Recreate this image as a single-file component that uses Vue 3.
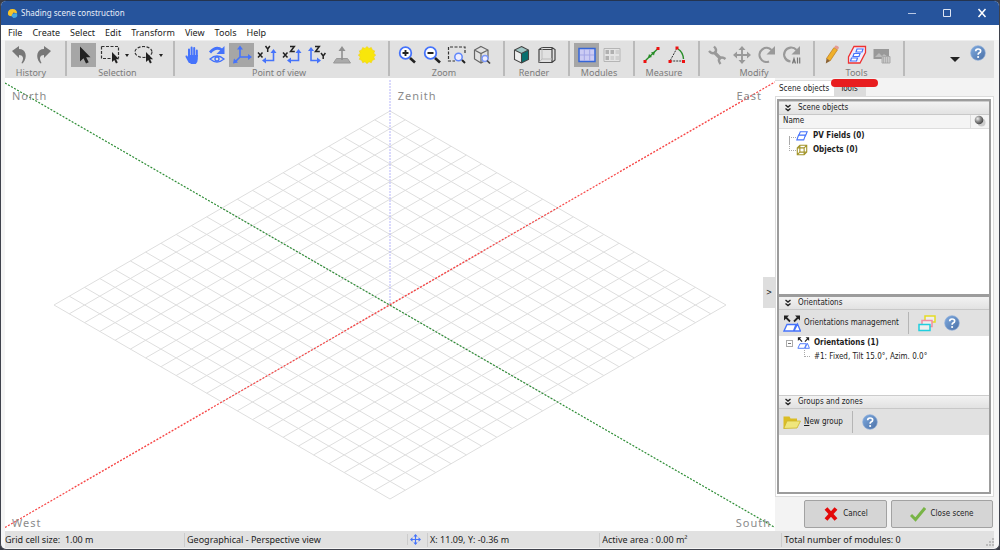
<script setup>
import { ref } from 'vue'

const menus = ['File', 'Create', 'Select', 'Edit', 'Transform', 'View', 'Tools', 'Help']

const groups = [
  { name: 'History', items: [{ id: 'undo' }, { id: 'redo' }] },
  { name: 'Selection', items: [{ id: 'pointer', active: true }, { id: 'rect-select', drop: true }, { id: 'lasso', drop: true }] },
  {
    name: 'Point of view',
    items: [{ id: 'hand' }, { id: 'orbit' }, { id: 'axes', active: true }, { id: 'view-xy' }, { id: 'view-xz' }, { id: 'view-zy' }, { id: 'plane' }, { id: 'sun' }]
  },
  { name: 'Zoom', items: [{ id: 'zoom-in' }, { id: 'zoom-out' }, { id: 'zoom-rect' }, { id: 'zoom-cube' }] },
  { name: 'Render', items: [{ id: 'solid' }, { id: 'wire' }] },
  { name: 'Modules', items: [{ id: 'modules', active: true }, { id: 'modules-part' }] },
  { name: 'Measure', items: [{ id: 'distance' }, { id: 'angle' }] },
  { name: 'Modify', items: [{ id: 'wrench' }, { id: 'move' }, { id: 'rotate' }, { id: 'rotate-all' }] },
  { name: 'Tools', items: [{ id: 'pencil' }, { id: 'fields' }, { id: 'picture' }] }
]

const tab = ref('scene')

const cells = 22
const cx = 385
const cy = 227
const halfW = 336
const halfH = 194
const gridPath = Array.from({ length: cells + 1 }, (_, i) => {
  const t = i / cells
  const dx = halfW * t
  const dy = halfH * t
  return `M${cx - halfW + dx} ${cy - dy}L${cx + dx} ${cy + halfH - dy}M${cx - halfW + dx} ${cy + dy}L${cx + dx} ${cy - halfH + dy}`
}).join('')
</script>

<template>
  <svg class="defs" aria-hidden="true">
    <defs>
      <linearGradient id="helpFill" x1="0" y1="0" x2="1" y2="1">
        <stop offset="0" stop-color="#7fabe0" /><stop offset="1" stop-color="#4a6fa5" />
      </linearGradient>
      <radialGradient id="ballFill" cx="0.35" cy="0.35" r="0.7">
        <stop offset="0" stop-color="#eeeeee" /><stop offset="0.5" stop-color="#888888" /><stop offset="1" stop-color="#444444" />
      </radialGradient>
    </defs>
    <symbol id="undo" viewBox="0 0 24 24"><path d="M5 8l7-5v3c7 0 9 8 4 14-1 1-2 0-1-1 2-4 1-7-3-7v3z" fill="#777" /></symbol>
    <symbol id="redo" viewBox="0 0 24 24"><path d="M19 8l-7-5v3c-7 0-9 8-4 14 1 1 2 0 1-1-2-4-1-7 3-7v3z" fill="#777" /></symbol>
    <symbol id="pointer" viewBox="0 0 24 24"><path d="M8 3.500v15l3.500-3.200 2.500 5.200 2.700-1.300-2.500-5h4.300z" fill="#222" /></symbol>
    <symbol id="rect-select" viewBox="0 0 24 24">
      <path d="M3.500 3.500h17v12M3.500 3.500v12h11" fill="none" stroke="#333" stroke-width="1.200" stroke-dasharray="3 1.500" />
      <path d="M14 9v10l2.300-2 1.700 3.500 1.800-.9-1.700-3.400h3z" fill="#222" />
    </symbol>
    <symbol id="lasso" viewBox="0 0 24 24">
      <ellipse cx="11.500" cy="9" rx="8.500" ry="5.500" fill="none" stroke="#333" stroke-width="1.200" stroke-dasharray="3 1.500" />
      <path d="M14 9v10l2.300-2 1.700 3.500 1.800-.9-1.700-3.400h3z" fill="#222" />
    </symbol>
    <symbol id="hand" viewBox="0 0 24 24">
      <path d="M9.500 19L6.500 13.500M9 13V6.500M11.600 12V4.500M14.200 12V5M16.800 13V7.500" stroke="#4573fb" stroke-width="2" stroke-linecap="round" />
      <path d="M8 12h9.800v4q0 3-2 5h-5L7.500 16z" fill="#4573fb" />
    </symbol>
    <symbol id="orbit" viewBox="0 0 24 24">
      <path d="M5 9.500q6-7 12-2.500" fill="none" stroke="#4573fb" stroke-width="2.800" />
      <path d="M19.500 3v8h-8z" fill="#4573fb" />
      <path d="M5 16q7-6 14 0-7 6-14 0z" fill="none" stroke="#4573fb" stroke-width="1.300" />
      <circle cx="12" cy="16" r="2" fill="none" stroke="#4573fb" stroke-width="1.400" />
    </symbol>
    <symbol id="axes" viewBox="0 0 24 24">
      <path d="M10 5v9h10M10 14l-5 5" fill="none" stroke="#4573fb" stroke-width="1.600" />
      <path d="M10 2.500l3 4H7zM22 14l-4 3v-6zM3 20.500l1-5 4 4z" fill="#4573fb" />
    </symbol>
    <symbol id="corner-left" viewBox="0 0 24 24">
      <path d="M18.500 9v8.500H10" fill="none" stroke="#4573fb" stroke-width="1.600" />
      <path d="M18.500 6l3 4h-6zM7 17.500l4-3v6z" fill="#4573fb" />
    </symbol>
    <symbol id="view-xy" viewBox="0 0 24 24">
      <use href="#corner-left" /><path d="M3 9.500l4.500 5M7.500 9.500l-4.500 5M10.500 3l2.200 3 2.200-3M12.700 6v3" fill="none" stroke="#222" stroke-width="1.500" />
    </symbol>
    <symbol id="view-xz" viewBox="0 0 24 24">
      <use href="#corner-left" /><path d="M3 9.500l4.500 5M7.500 9.500l-4.500 5M10 3.500h4.300l-3.800 5h4.300" fill="none" stroke="#222" stroke-width="1.500" />
    </symbol>
    <symbol id="view-zy" viewBox="0 0 24 24">
      <path d="M6 7v10.500h8" fill="none" stroke="#4573fb" stroke-width="1.600" />
      <path d="M6 4l3 4H3zM16 17.500l-4 3v-6z" fill="#4573fb" />
      <path d="M10 3.500h4.300l-3.800 5h4.300M16 10l2.200 3 2.200-3M18.200 13v3" fill="none" stroke="#222" stroke-width="1.500" />
    </symbol>
    <symbol id="plane" viewBox="0 0 24 24">
      <path d="M3.500 20l3-4.500h11l3 4.500z" fill="#aaa" stroke="#999" /><path d="M12 17V6" stroke="#909090" stroke-width="1.600" /><path d="M12 3l3.500 5h-7z" fill="#909090" />
    </symbol>
    <symbol id="sun" viewBox="0 0 24 24">
      <path d="M12 3.500l2 2 2.300-1 1 2.400 2.400 1-1 2.300 2 1.800-2 2 1 2.300-2.400 1-1 2.400-2.300-1-2 2-2-2-2.300 1-1-2.400-2.400-1 1-2.300-2-2 2-1.800-1-2.300 2.400-1 1-2.400 2.300 1z" fill="#f8e60b" stroke="#f2cf10" stroke-width="0.600" />
    </symbol>
    <symbol id="zoom-in" viewBox="0 0 24 24">
      <circle cx="10.500" cy="10" r="5.800" fill="#fff" stroke="#4573fb" stroke-width="1.800" /><path d="M7.500 10h6M10.500 7v6" stroke="#222" stroke-width="1.900" /><path d="M15 15l5 4.500" stroke="#222" stroke-width="2.600" />
    </symbol>
    <symbol id="zoom-out" viewBox="0 0 24 24">
      <circle cx="10.500" cy="10" r="5.800" fill="#fff" stroke="#4573fb" stroke-width="1.800" /><path d="M7.500 10h6" stroke="#222" stroke-width="1.900" /><path d="M15 15l5 4.500" stroke="#222" stroke-width="2.600" />
    </symbol>
    <symbol id="zoom-rect" viewBox="0 0 24 24">
      <path d="M20 10V4H3.500v14H10" fill="none" stroke="#333" stroke-width="1.200" stroke-dasharray="3 1.500" /><circle cx="13.500" cy="14" r="3.700" fill="#eef" stroke="#5f86fb" stroke-width="1.500" /><path d="M17 17l3 3" stroke="#222" stroke-width="2" />
    </symbol>
    <symbol id="zoom-cube" viewBox="0 0 24 24">
      <path d="M11 3.500l7 3.500v9l-7 4-6.500-4V7zM4.500 7l6.500 3.500L18 7M11 10.500V20" fill="none" stroke="#666" stroke-width="1.200" /><circle cx="15" cy="15.500" r="3" fill="#eef" stroke="#7c99fb" stroke-width="1.400" /><path d="M17 17.500l3 3" stroke="#444" stroke-width="1.700" />
    </symbol>
    <symbol id="solid" viewBox="0 0 24 24">
      <path d="M4.500 7v9.500l7 3.500v-9.500z" fill="#eee" /><path d="M4.500 7l7-3.500 7 3.500-7 3.500z" fill="#9fc6c5" /><path d="M11.500 10.500V20l7-3.500V7z" fill="#08706f" /><path d="M11.500 3.500l7 3.500v9.500l-7 3.500-7-3.500V7zM4.500 7l7 3.500L18.500 7M11.500 10.500V20" fill="none" stroke="#444" stroke-width="1.100" />
    </symbol>
    <symbol id="wire" viewBox="0 0 24 24">
      <path d="M4 6.500L7 4.500h10l3 2V17l-3 2.500H4zM4 6.500h13v13M17 4.500v2" fill="none" stroke="#444" stroke-width="1.200" /><path d="M7 4.500V16h10M7 16l-3 3.500" fill="none" stroke="#bbb" />
    </symbol>
    <symbol id="modules" viewBox="0 0 24 24">
      <path d="M4 5.500h16v13H4z" fill="#ccccf4" stroke="#3566d8" stroke-width="1.500" /><path d="M9.300 6v12M14.700 6v12M5 12h14" stroke="#a3a6e6" />
    </symbol>
    <symbol id="modules-part" viewBox="0 0 24 24">
      <path d="M4 5.500h16v13H4z" fill="#e4e4e4" stroke="#b5b5b5" /><path d="M5.500 7H9v4H5.500zM10.500 7H14v4h-3.500zM5.500 13H9v4H5.500z" fill="#b0b0b0" /><path d="M15.500 7H19v4h-3.500zM10.500 13H14v4h-3.500zM15.500 13H19v4h-3.500z" fill="#d0d0d0" />
    </symbol>
    <symbol id="distance" viewBox="0 0 24 24">
      <path d="M5 18L18 5.500" stroke="#268c26" stroke-width="1.400" /><path d="M8 15l1-4 3 3zM15 8.500l-4 1 3 3z" fill="#268c26" /><path d="M3.500 17h3v3h-3zM16.500 4h3v3h-3z" fill="#e11" />
    </symbol>
    <symbol id="angle" viewBox="0 0 24 24">
      <path d="M12 5L5 18h14" fill="none" stroke="#333" stroke-dasharray="2 1" /><path d="M13 6q5 3 5.500 10" fill="none" stroke="#268c26" stroke-width="1.400" /><path d="M10.500 3.500h3v3h-3zM3.500 17h3v3h-3zM17 17h3v3h-3z" fill="#e11" />
    </symbol>
    <symbol id="wrench" viewBox="0 0 24 24">
      <path d="M9 9l7 7" stroke="#999" stroke-width="3.200" /><path d="M9 3.500q3.500 3.500 1 6-3 2-6-1.500M15.500 21q-3-4-.5-6 2.500-1.500 5.500 1" fill="none" stroke="#999" stroke-width="2.400" />
    </symbol>
    <symbol id="move" viewBox="0 0 24 24">
      <path d="M12 6v12M6 12h12" stroke="currentColor" stroke-width="1.900" /><path d="M12 3l3.500 4h-7zM12 21l3.500-4h-7zM3 12l4-3.500v7zM21 12l-4-3.500v7z" fill="currentColor" />
    </symbol>
    <symbol id="rotate" viewBox="0 0 24 24">
      <path d="M16.500 7A7 7 0 1 0 14 18.500" fill="none" stroke="#999" stroke-width="2.200" /><path d="M20 3v8.500h-8.500z" fill="#999" />
    </symbol>
    <symbol id="rotate-all" viewBox="0 0 24 24">
      <path d="M16.500 7A7 7 0 1 0 10.500 18.500" fill="none" stroke="#999" stroke-width="2.200" /><path d="M20 3v8.500h-8.500z" fill="#999" /><path d="M12.500 20.500l1.500-5 1.500 5M13 19h2M17.500 14.500v6M19.700 14.500v6" fill="none" stroke="#777" stroke-width="1.200" />
    </symbol>
    <symbol id="pencil" viewBox="0 0 24 24">
      <path d="M6.500 15.500L14 4.500l3.500 2.300L10 18z" fill="#efb02b" stroke="#b9791a" stroke-width=".7" /><path d="M14 4.500L15.500 2.500q3.200 0 3.500 2.500l-1.500 1.800z" fill="#e49a92" /><path d="M6.500 15.500l-.7 5L10 18z" fill="#8a6234" />
    </symbol>
    <symbol id="fields" viewBox="0 0 24 24">
      <path d="M9 3.500h11.500v6L15 20H3.500v-6z" fill="#eef" stroke="#e33" stroke-width="1.300" /><path d="M12 6h6l-1 3h-6zM9 10.500h6l-1 3H8zM6.500 15h6l-1 3h-6z" fill="#fff" stroke="#4573fb" stroke-width="1.200" />
    </symbol>
    <symbol id="picture" viewBox="0 0 24 24">
      <path d="M3.500 6H19v10H3.500z" fill="#999" /><path d="M5 14l4-4 3 3 2-2 4 3z" fill="#bbb" /><path d="M12 13.500h8V20h-8z" fill="#c9c9c9" stroke="#aaa" /><path d="M13 15h6M13 17h6M13 19h6" stroke="#999" stroke-dasharray="1 1" />
    </symbol>
    <symbol id="help" viewBox="0 0 24 24">
      <circle cx="12" cy="12" r="11" fill="url(#helpFill)" stroke="#8eaddb" /><path d="M8.500 9.500q0-3.500 3.500-3.500 4 0 4 3 0 2-2.500 3-1.300.8-1.300 2.500" fill="none" stroke="#fff" stroke-width="2.500" /><circle cx="12.200" cy="18" r="1.600" fill="#fff" />
    </symbol>
    <symbol id="chevrons" viewBox="0 0 10 10"><path d="M2.500 2l2.500 2 2.500-2M2.500 5.500l2.500 2 2.500-2" fill="none" stroke="#222" stroke-width="1.400" /></symbol>
    <symbol id="pv" viewBox="0 0 14 12"><path d="M5 1h8l-2 5H3z" fill="#fff" stroke="#4573fb" stroke-width="1.300" /><path d="M3 5h8l-2 5.500H1z" fill="#fff" stroke="#4573fb" stroke-width="1.300" /></symbol>
    <symbol id="cube" viewBox="0 0 14 14"><path d="M1.500 4.500l3-3h8v8l-3 3h-8zM1.500 4.500h8v8M9.500 4.500l3-3M4.500 1.500v8h8M4.500 9.500l-3 3" fill="none" stroke="#a3952b" stroke-width="1.300" /></symbol>
    <symbol id="orient" viewBox="0 0 18 17">
      <path d="M7 6.500L2.500 2M11 6.500L15.500 2" stroke="#222" stroke-width="1.800" /><path d="M1 .5h5l-5 5zM17 .5h-5l5 5z" fill="#222" /><path d="M4 9.500h9L10.500 16H1zM14.500 9l3 7H11z" fill="#fff" stroke="#4573fb" stroke-width="1.300" />
    </symbol>
  </svg>

  <div class="window">
    <header class="titlebar">
      <svg class="logo" viewBox="0 0 12 12" aria-hidden="true">
        <path d="M1 6Q1 1 6 1q5 0 5 5L7 5 5 9Q1 9 1 6z" fill="#f6c32a" /><path d="M5 9q0-4 6-3 1 5-4 5z" fill="#49a7de" />
      </svg>
      <h1>Shading scene construction</h1>
      <div class="winbtns">
        <button aria-label="Minimize"><svg viewBox="0 0 10 10"><path d="M1 5.500h8" stroke="#b9c8e4" /></svg></button>
        <button aria-label="Maximize"><svg viewBox="0 0 10 10"><path d="M1.500 1.500h7v7h-7z" fill="none" stroke="#dde5f3" /></svg></button>
        <button aria-label="Close"><svg viewBox="0 0 10 10"><path d="M1.500 1l7 8M8.500 1l-7 8" stroke="#fff" stroke-width="1.500" /></svg></button>
      </div>
    </header>

    <nav class="menubar">
      <button v-for="m in menus" :key="m">{{ m }}</button>
    </nav>

    <div class="toolbar">
      <div v-for="g in groups" :key="g.name" class="group">
        <div class="icons">
          <button v-for="it in g.items" :key="it.id" class="tool" :class="{ active: it.active, split: it.drop }" :aria-label="it.id">
            <svg class="glyph" viewBox="0 0 24 24"><use :href="'#' + it.id" /></svg>
            <span v-if="it.drop" class="caret"></span>
          </button>
        </div>
        <span class="glabel">{{ g.name }}</span>
      </div>
      <div class="toolend">
        <button class="more" aria-label="More"><span class="caret big"></span></button>
        <button class="helpbtn" aria-label="Help"><svg viewBox="0 0 24 24"><use href="#help" /></svg></button>
      </div>
    </div>

    <main class="body">
      <section class="scene">
        <svg class="view" viewBox="0 0 770 453" preserveAspectRatio="xMidYMid slice">
          <path :d="gridPath" fill="none" stroke="#dedede" />
          <path d="M385 2v225" stroke="#b4b4fa" stroke-dasharray="2 1" />
          <path d="M0 5L770 449.500" stroke="#2c8c34" stroke-width="1.300" stroke-dasharray="2 1.500" />
          <path d="M0 449.500L770 4" stroke="#f74545" stroke-width="1.300" stroke-dasharray="2 1.500" />
        </svg>
        <span class="dir north">North</span>
        <span class="dir zenith">Zenith</span>
        <span class="dir east">East</span>
        <span class="dir west">West</span>
        <span class="dir south">South</span>
        <button class="collapse" aria-label="Collapse panel">&gt;</button>
      </section>

      <aside class="side">
        <div class="tabs">
          <button class="tab" :class="{ on: tab === 'scene' }" @click="tab = 'scene'">Scene objects</button>
          <button class="tab" :class="{ on: tab === 'tools' }" @click="tab = 'tools'">Tools</button>
          <span class="mark"></span>
        </div>
        <div class="page">
          <div class="stack">
            <h2 class="head"><svg viewBox="0 0 10 10"><use href="#chevrons" /></svg>Scene objects</h2>
            <div class="colhead"><span>Name</span><i><svg viewBox="0 0 12 12"><circle cx="7.500" cy="7.500" r="4" fill="#ccc" /><circle cx="5" cy="5" r="4.300" fill="url(#ballFill)" /></svg></i></div>
            <ul class="tree objects">
              <li><svg viewBox="0 0 14 12"><use href="#pv" /></svg><b>PV Fields (0)</b></li>
              <li><svg viewBox="0 0 14 14"><use href="#cube" /></svg><b>Objects (0)</b></li>
            </ul>
            <h2 class="head thick"><svg viewBox="0 0 10 10"><use href="#chevrons" /></svg>Orientations</h2>
            <div class="bar">
              <button class="cmd"><svg class="i18" viewBox="0 0 18 17"><use href="#orient" /></svg>Orientations management</button>
              <span class="rule"></span>
              <button class="cmd" aria-label="Groups by colour">
                <svg class="i18" viewBox="0 0 18 17"><path d="M7 1h10v6H7z" fill="#eee" stroke="#e5dc24" stroke-width="1.500" /><path d="M4 5.500h10v6H4z" fill="#eee" stroke="#f28ca0" stroke-width="1.500" /><path d="M1 9.500h11v6H1z" fill="#eee" stroke="#20cede" stroke-width="1.500" /></svg>
              </button>
              <button class="cmd" aria-label="Orientation help"><svg class="i16" viewBox="0 0 24 24"><use href="#help" /></svg></button>
            </div>
            <ul class="tree orientations">
              <li><span class="minus"></span><svg viewBox="0 0 18 17"><use href="#orient" /></svg><b>Orientations (1)</b></li>
              <li class="leaf">#1: Fixed, Tilt 15.0°, Azim. 0.0°</li>
            </ul>
            <h2 class="head"><svg viewBox="0 0 10 10"><use href="#chevrons" /></svg>Groups and zones</h2>
            <div class="bar">
              <button class="cmd"><svg class="i18" viewBox="0 0 18 14"><path d="M.5 1h6l1 2H14v3L3 13H.5z" fill="#dbbd24" /><path d="M4 5.500h13.500L14 12.500.8 13z" fill="#efe67c" stroke="#cdb52c" stroke-width=".8" /></svg><span><u>N</u>ew group</span></button>
              <span class="rule"></span>
              <button class="cmd" aria-label="Group help"><svg class="i16" viewBox="0 0 24 24"><use href="#help" /></svg></button>
            </div>
            <div class="tree zones"></div>
          </div>
        </div>
        <div class="actions">
          <button class="act cancel"><svg viewBox="0 0 16 16"><path d="M3 2.500l10 11M13 2.500l-10 11" stroke="#e30909" stroke-width="3.800" /></svg>Cancel</button>
          <button class="act close"><svg viewBox="0 0 16 16"><path d="M1 9l4.500 4.500L15 2" fill="none" stroke="#78b446" stroke-width="3" /></svg>Close scene</button>
        </div>
      </aside>
    </main>

    <footer class="status">
      <span class="s1">Grid cell size:&nbsp; 1.00 m</span>
      <span class="s2">Geographical - Perspective view</span>
      <span class="s3"><svg viewBox="3 3 18 18"><use href="#move" width="24" height="24" /></svg></span>
      <span class="s4">X: 11.09, Y: -0.36 m</span>
      <span class="s5">Active area : 0.00 m²</span>
      <span class="s6">Total number of modules: 0</span>
      <svg class="grip" viewBox="0 0 8 8"><path d="M6 0h2v2H6zM6 3h2v2H6zM3 3h2v2H3zM6 6h2v2H6zM3 6h2v2H3zM0 6h2v2H0z" fill="#bbb" /></svg>
    </footer>
  </div>
</template>

<style>
body { background: #3a3c46; }
</style>

<style scoped>
.defs { position: absolute; width: 0; height: 0; }
.window {
  box-sizing: border-box;
  min-height: 100vh;
  display: flex;
  flex-direction: column;
  border: 1px solid #3f424c;
  border-top-color: #24344f;
  border-radius: 6px;
  overflow: hidden;
  background: #f5f5f5;
  color: #1c1c1c;
  font: 8px/12px "DejaVu Sans Condensed", "Noto Sans", sans-serif;
}
button { font: inherit; color: inherit; border: 0; padding: 0; margin: 0; background: none; }
svg { display: block; flex: none; }
h1, h2 { margin: 0; font-weight: normal; font-size: inherit; }
ul { list-style: none; margin: 0; padding: 0; }

.titlebar { display: flex; align-items: center; height: 24px; background: #26549c; color: #e8eef8; padding-left: 6px; }
.titlebar h1 { font: 8px/12px "Noto Sans", sans-serif; margin-left: 3px; flex: 1; }
.logo { width: 11px; height: 11px; }
.winbtns { display: flex; }
.winbtns button { width: 35px; height: 24px; display: grid; place-items: center; }
.winbtns svg { width: 10px; height: 10px; }

.menubar { display: flex; gap: 10px; height: 15px; padding-left: 7px; background: #fff; font: 9px/15px "Noto Sans", sans-serif; }

.toolbar { display: flex; height: 38px; margin: 0 5px 0 4px; background: #e1e1e1; border-top: 1px solid #eee; box-sizing: border-box; }
.group { display: flex; flex-direction: column; align-items: center; padding: 2px 9px 0 4px; border-right: 2px solid #bababa; margin-bottom: 2px; }
.group:first-child { padding-left: 1px; }
.icons { display: flex; }
.tool { width: 25px; height: 24px; display: flex; align-items: center; justify-content: center; color: #999; }
.tool.active { background: #a6a6a6; }
.tool.split { width: 34px; gap: 5px; }
.glyph { width: 24px; height: 24px; }
.caret { border: 2px solid transparent; border-top: 3px solid #222; border-bottom: 0; margin-left: -2px; }
.caret.big { border-width: 5px 5px 0; margin: 0; }
.glabel { color: #7b7b7b; font: 9px/11px "Noto Sans", sans-serif; }
.toolend { margin-left: auto; display: flex; align-items: center; gap: 10px; padding-right: 8px; }
.more { display: flex; }
.helpbtn { padding-bottom: 13px; }
.helpbtn svg { width: 16px; height: 16px; }

.body { flex: 1; display: flex; }
.scene { position: relative; flex: 1; margin-left: 4px; background: #fff; overflow: hidden; }
.view { position: absolute; width: 100%; height: 100%; }
.dir { position: absolute; font: 11px/14px "Noto Sans", sans-serif; letter-spacing: 1px; color: #8b8b8b; }
.north { left: 7px; top: 11px; }
.zenith { left: 51%; top: 11px; }
.east { right: 13px; top: 11px; }
.west { left: 7px; bottom: 1px; }
.south { right: 4px; bottom: 1px; }
.collapse { position: absolute; right: 0; top: 199px; width: 12px; height: 31px; background: #dedede; }

.side { width: 219px; margin-right: 5px; display: flex; flex-direction: column; background: #f3f3f3; }
.tabs { position: relative; display: flex; height: 18px; padding-top: 2px; box-sizing: border-box; }
.tab { background: #dcdcdc; padding: 0 8px 0 6px; border-top: 1px solid #ddd; }
.tab.on { background: #fff; padding: 0 5px 0 4px; }
.mark { position: absolute; left: 56px; top: 1px; width: 47px; height: 8px; border-radius: 4px; background: #e81d1f; }
.page { flex: 1; display: flex; padding: 2px 2px 2px 1px; border: 1px solid #dcdcdc; background: #fff; }
.stack { flex: 1; display: flex; flex-direction: column; border: 2px solid #9c9c9c; }
.head { display: flex; align-items: center; gap: 5px; height: 14px; padding-left: 4px; background: linear-gradient(#f2f2f2, #e2e2e2); border-bottom: 1px solid #c8c8c8; border-top: 1px solid #ccc; box-sizing: border-box; }
.head.thick { height: 16px; border-top: 3px solid #9c9c9c; }
.head svg { width: 10px; height: 10px; }
.colhead { display: flex; justify-content: space-between; height: 13px; background: #f4f4f4; border-bottom: 1px solid #ddd; padding-left: 4px; }
.colhead i { border-left: 1px solid #ddd; padding: 0 3px; }
.colhead svg { width: 12px; height: 12px; }
.tree { background: #fff; }
.objects { flex: 165 1 0; }
.orientations { flex: 59 1 0; }
.zones { flex: 57 1 0; }
.tree li { display: flex; align-items: center; height: 14px; gap: 5px; }
.objects li { padding-left: 17px; }
.objects li::before { content: ""; position: absolute; width: 6px; height: 14px; margin-left: -7px; border-left: 1px dotted #aaa; border-bottom: 1px dotted #aaa; transform: translateY(-7px); }
.objects li:first-child::before { height: 6px; border-bottom: 0; border-top: 1px dotted #aaa; transform: translateY(4px); }
.objects svg { width: 12px; height: 12px; }
.orientations li svg { width: 13px; height: 12px; }
.orientations li:first-child { padding-left: 7px; gap: 4px; }
.minus { width: 7px; height: 7px; box-sizing: border-box; border: 1px solid #aaa; background: linear-gradient(#777, #777) center / 3px 1px no-repeat; }
.orientations .leaf { padding-left: 35px; }
.leaf::before { content: ""; position: absolute; width: 5px; height: 6px; margin-left: -10px; border-left: 1px dotted #aaa; border-bottom: 1px dotted #aaa; transform: translateY(-4px); }
.bar { display: flex; align-items: center; height: 26px; padding-left: 4px; background: #e1e1e1; }
.cmd { display: flex; align-items: center; gap: 3px; }
.i18 { width: 18px; height: 17px; }
.i16 { width: 16px; height: 16px; }
.rule { width: 1px; height: 22px; background: #b5b5b5; margin: 0 9px; }
.cmd + .cmd { margin-left: 8px; }

.actions { display: flex; justify-content: flex-end; gap: 4px; padding: 3px 1px 3px 0; }
.act { display: flex; align-items: center; justify-content: center; gap: 4px; height: 28px; box-sizing: border-box; border: 1px solid #a2a2a2; border-radius: 2px; background: #d5d5d5; }
.act svg { width: 16px; height: 16px; }
.cancel { width: 83px; }
.close { width: 102px; }

.status { display: flex; align-items: center; height: 17px; margin: 0 5px 1px 4px; background: #e1e1e1; font: 9px/14px "Noto Sans", sans-serif; }
.status span { border-left: 1px solid #ccc; padding-left: 2px; box-sizing: border-box; white-space: nowrap; }
.status .s1 { flex: 182 1 0; border: 0; padding: 0; }
.s2 { flex: 224 1 0; }
.s3 { flex: 17 0 0; color: #4573fb; }
.s3 svg { width: 11px; height: 11px; }
.s4 { flex: 172 1 0; }
.s5 { flex: 182 1 0; }
.s6 { flex: 205 1 0; }
.grip { width: 8px; height: 8px; align-self: flex-end; margin-bottom: 2px; }
</style>
